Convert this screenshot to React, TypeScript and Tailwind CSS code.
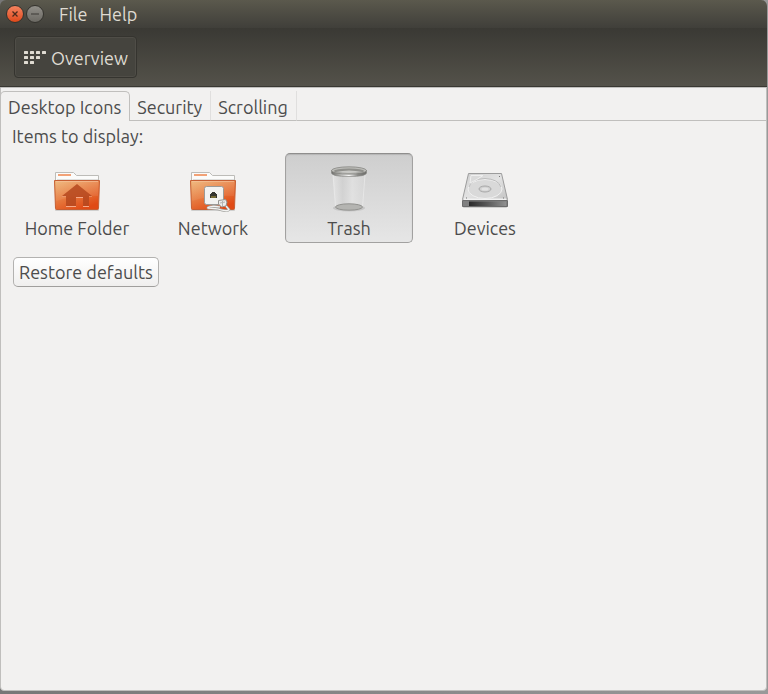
import { useState } from "react";
import type { ReactNode } from "react";

function FolderBase({ id }: { id: string }) {
  return (
    <>
      <defs>
        <linearGradient id={`${id}-front`} x1="0" y1="0" x2="0.6" y2="1">
          <stop offset="0" stopColor="#edb474" />
          <stop offset="0.45" stopColor="#e88448" />
          <stop offset="1" stopColor="#e04a15" />
        </linearGradient>
        <linearGradient id={`${id}-shine`} x1="0" y1="0" x2="0" y2="1">
          <stop offset="0" stopColor="#fff" stopOpacity="0.1" />
          <stop offset="1" stopColor="#fff" stopOpacity="0.06" />
        </linearGradient>
      </defs>
      <rect x="2" y="44" width="44" height="2" rx="1" fill="#000" opacity="0.14" />
      <path d="M2.500 17V7.500H20.500L23.500 10.500H45.500V17Z" fill="#fbfbfa" stroke="#bdbcb8" />
      <path d="M5 10H18" stroke="#f2a277" strokeWidth="2" />
      <path d="M4 14.500H45" stroke="#dededc" />
      <path d="M1.500 15.500H46.500L45.500 43.500Q45.500 44.500 44.500 44.500H3.500Q2.500 44.500 2.500 43.500Z" fill={`url(#${id}-front)`} stroke="#c65f33" />
      <path d="M2.500 16.500H45.500L45 31Q20 30 3 36Z" fill={`url(#${id}-shine)`} />
      <path d="M3 16.500H45" stroke="#f8c8a4" opacity="0.6" />
    </>
  );
}

function HomeIcon() {
  return (
    <svg viewBox="0 0 48 48" className="size-12" aria-hidden="true">
      <FolderBase id="home" />
      <path d="M9 31L24 19L39 31H36V41H30V32H23V41H13V31Z" fill="#b5481f" opacity="0.85" />
      <path d="M13 41.500H23M30 41.500H36M23 32.500H30" stroke="#f6a989" />
      <path d="M9 31.500H13M36 31.500H39" stroke="#f0a07a" opacity="0.6" />
    </svg>
  );
}

function NetworkIcon() {
  return (
    <svg viewBox="0 0 48 48" className="size-12" aria-hidden="true">
      <FolderBase id="network" />
      <rect x="15.500" y="21.500" width="19" height="18" rx="2" fill="#f2f2f1" stroke="#9b9a97" />
      <path d="M21 33V29H22V28H23V27H26V28H27V29H28V33Z" fill="#35352f" />
      <path d="M22 32H27" stroke="#b5a13f" />
      <path d="M31 42C27 41 21 41 19 42.500C17.500 44 24 43 29 44C34 45.500 39 47 40 44.500L37 41" fill="none" stroke="#a5a4a1" strokeWidth="2.400" />
      <path d="M31 42C27 41 21 41 19 42.500C17.500 44 24 43 29 44C34 45.500 39 47 40 44.500L37 41" fill="none" stroke="#f3f3f2" strokeWidth="1.200" />
      <path d="M29.500 35.500L36.500 34.500L38 37L37 41L32.500 42L29.500 39Z" fill="#ececeb" stroke="#94938f" />
      <path d="M31 38L36 37M33.500 36V41" stroke="#b5b4b1" />
    </svg>
  );
}

function TrashIcon() {
  return (
    <svg viewBox="0 0 48 48" className="size-12" aria-hidden="true">
      <defs>
        <linearGradient id="bin-body" x1="0" x2="1">
          <stop offset="0" stopColor="#eee" stopOpacity="0.5" />
          <stop offset="0.3" stopColor="#ccc" stopOpacity="0.5" />
          <stop offset="0.6" stopColor="#e6e6e6" stopOpacity="0.6" />
          <stop offset="1" stopColor="#d6d6d6" stopOpacity="0.5" />
        </linearGradient>
        <linearGradient id="bin-rim" x1="0" x2="1">
          <stop offset="0" stopColor="#6b6b68" />
          <stop offset="0.2" stopColor="#a5a5a2" />
          <stop offset="0.5" stopColor="#fafafa" />
          <stop offset="0.75" stopColor="#8a8a87" />
          <stop offset="1" stopColor="#6b6b68" />
        </linearGradient>
      </defs>
      <ellipse cx="24" cy="43" rx="16" ry="3.500" fill="#000" opacity="0.1" />
      <path d="M8 10L10.500 42Q24 48 37.500 42L40 10Z" fill="url(#bin-body)" stroke="#efefef" strokeOpacity="0.6" />
      <ellipse cx="24" cy="42" rx="13.500" ry="3.200" fill="#b4b4b1" stroke="#92928f" />
      <path d="M6.500 5.500V8Q7 11.500 24 11.500T41.500 8V5.500Z" fill="url(#bin-rim)" stroke="#888885" strokeWidth="0.700" />
      <ellipse cx="24" cy="5.500" rx="17.500" ry="3.700" fill="#bcbcb8" stroke="#7c7c78" strokeWidth="0.700" />
      <ellipse cx="24" cy="6" rx="15" ry="2.500" fill="#90908c" />
      <path d="M11 7Q24 4 37 7Q24 9 11 7Z" fill="#c9c9c6" />
    </svg>
  );
}

function DriveIcon() {
  return (
    <svg viewBox="0 0 48 48" className="size-12" aria-hidden="true">
      <defs>
        <linearGradient id="drive-top" x1="0" x2="1" y2="1">
          <stop offset="0" stopColor="#cfcfcf" />
          <stop offset="0.5" stopColor="#e2e2e2" />
          <stop offset="1" stopColor="#c4c4c4" />
        </linearGradient>
        <linearGradient id="drive-front" x1="0" x2="1">
          <stop offset="0" stopColor="#2a2a2a" />
          <stop offset="0.5" stopColor="#5a5a5a" />
          <stop offset="1" stopColor="#909090" />
        </linearGradient>
      </defs>
      <rect x="2" y="41" width="44" height="2" rx="1" fill="#000" opacity="0.14" />
      <path d="M7.500 8.500H40.500L46.500 34.500H1.500Z" fill="url(#drive-top)" stroke="#9c9c9c" />
      <path d="M2 35H46L45 33.500H3Z" fill="#f2f2f2" />
      <path d="M1.500 35.500H46.500V41.500H1.500Z" fill="#808080" stroke="#6c6c6c" />
      <path d="M8 36.500H45V41H8Z" fill="url(#drive-front)" />
      <ellipse cx="24" cy="24" rx="17" ry="9.500" fill="#d9d9d9" stroke="#f0f0f0" />
      <path d="M8 22Q10 14 24 13.500Q37 14 40 22" fill="none" stroke="#bdbdbd" />
      <path d="M10 10.500H22L15 15L9 18Z" fill="#dadada" stroke="#efefef" />
      <ellipse cx="24" cy="24" rx="6" ry="3" fill="#d0d0d0" stroke="#a8a8a8" />
      <ellipse cx="24" cy="24" rx="3.500" ry="1.500" fill="#e2e2e2" />
      <path d="M38 11.500H39M5 33H6M42 33H43" stroke="#777" />
    </svg>
  );
}

const items: { label: string; icon: ReactNode }[] = [
  { label: "Home Folder", icon: <HomeIcon /> },
  { label: "Network", icon: <NetworkIcon /> },
  { label: "Trash", icon: <TrashIcon /> },
  { label: "Devices", icon: <DriveIcon /> },
];

const tabs = ["Desktop Icons", "Security", "Scrolling"];

export default function App() {
  const [tab, setTab] = useState("Desktop Icons");
  const [shown, setShown] = useState<string[]>(["Trash"]);

  const toggle = (label: string) =>
    setShown((now) => (now.includes(label) ? now.filter((l) => l !== label) : [...now, label]));

  return (
    <div className="flex min-h-screen flex-col bg-linear-to-r from-[#777777] to-[#999999] pr-px pb-[3px] font-['Ubuntu','Noto_Sans',sans-serif] text-[18px] leading-6 text-[#4c4c4c]">
      <header className="rounded-t-md border-b border-[#393832] text-[#dfdbd2]">
        <div className="flex h-7 items-center rounded-t-md bg-linear-to-b from-[#5b594d] to-[#403f3a] pb-px pl-1.5">
          <button type="button" aria-label="Close" className="mr-0.5 flex size-[18px] items-center justify-center rounded-full border border-[#34332e] bg-linear-to-b from-[#f5835e] to-[#de4817]">
            <svg viewBox="0 0 6 6" className="size-1.5" aria-hidden="true">
              <path d="M0.500 0.500L5.500 5.500M5.500 0.500L0.500 5.500" stroke="#4b2a1c" strokeWidth="1.300" />
            </svg>
          </button>
          <button type="button" aria-label="Minimize" className="flex size-[18px] items-center justify-center rounded-full border border-[#34332e] bg-linear-to-b from-[#92908a] to-[#6b6963]">
            <svg viewBox="0 0 8 2" className="h-0.5 w-2" aria-hidden="true">
              <path d="M0 1H8" stroke="#3c3b37" />
            </svg>
          </button>
          <nav className="ml-[15px] flex gap-3">
            <button type="button">File</button>
            <button type="button">Help</button>
          </nav>
        </div>
        <div className="flex h-[58px] items-center bg-linear-to-b from-[#3a3934] to-[#54524a] pl-[14px]">
          <button type="button" className="flex h-[42px] items-center gap-1 rounded border border-[#35342f] bg-[#45443e] px-2 pt-0.5 shadow-[inset_0_0_0_1px_#4f4d47]">
            <svg viewBox="0 0 24 14" className="h-3.5 w-6" fill="#dfdbd2" aria-hidden="true">
              <rect x="1" y="0" width="4" height="3" rx="0.500" />
              <rect x="7" y="0" width="4" height="3" rx="0.500" />
              <rect x="13" y="0" width="4" height="3" rx="0.500" />
              <rect x="19" y="0" width="4" height="3" rx="0.500" />
              <rect x="1" y="5" width="4" height="3" rx="0.500" />
              <rect x="7" y="5" width="4" height="3" rx="0.500" />
              <rect x="13" y="5" width="4" height="3" rx="0.500" />
              <rect x="1" y="10" width="4" height="3" rx="0.500" />
              <rect x="7" y="10" width="4" height="3" rx="0.500" />
            </svg>
            Overview
          </button>
        </div>
      </header>

      <main className="flex grow flex-col rounded-b border border-[#c0bfbd] bg-[#f2f1f0]">
        <div role="tablist" className="flex h-[33px] items-end pt-[3px]">
          {tabs.map((name) => (
            <button
              key={name}
              type="button"
              role="tab"
              aria-selected={tab === name}
              onClick={() => setTab(name)}
              className={
                tab === name
                  ? "-ml-px h-full rounded-t-[5px] border border-b-0 border-[#c0bfbd] pr-2 pl-[7px]"
                  : "h-full border-r border-b border-r-[#e0dfde] border-b-[#c0bfbd] pt-0.5 pr-2 pl-[7px]"
              }
            >
              {name}
            </button>
          ))}
          <div className="h-px grow bg-[#c0bfbd]" />
        </div>

        <section role="tabpanel" aria-label={tab} className="flex flex-col items-start px-3 pt-[3px]">
          <h1 className="-ml-px">Items to display:</h1>
          <div className="mt-[5px] flex flex-wrap gap-2">
            {items.map(({ label, icon }) => (
              <button
                key={label}
                type="button"
                aria-pressed={shown.includes(label)}
                onClick={() => toggle(label)}
                className={
                  shown.includes(label)
                    ? "flex h-[90px] w-32 flex-col items-center rounded-[5px] border border-[#a2a1a0] border-t-[#8f8e8d] bg-linear-to-b from-[#cecece] to-[#e6e6e6] pt-[11px] shadow-[inset_0_1px_1px_#b5b5b5]"
                    : "flex h-[90px] w-32 flex-col items-center rounded-[5px] border border-transparent pt-[11px]"
                }
              >
                {icon}
                <span className="mt-[3px]">{label}</span>
              </button>
            ))}
          </div>
          <button type="button" className="mt-[14px] h-[30px] rounded-[5px] border border-[#b3b2b0] border-b-[#a09f9d] bg-linear-to-b from-white to-[#f0efee] px-[5px]">
            Restore defaults
          </button>
        </section>
      </main>
    </div>
  );
}
